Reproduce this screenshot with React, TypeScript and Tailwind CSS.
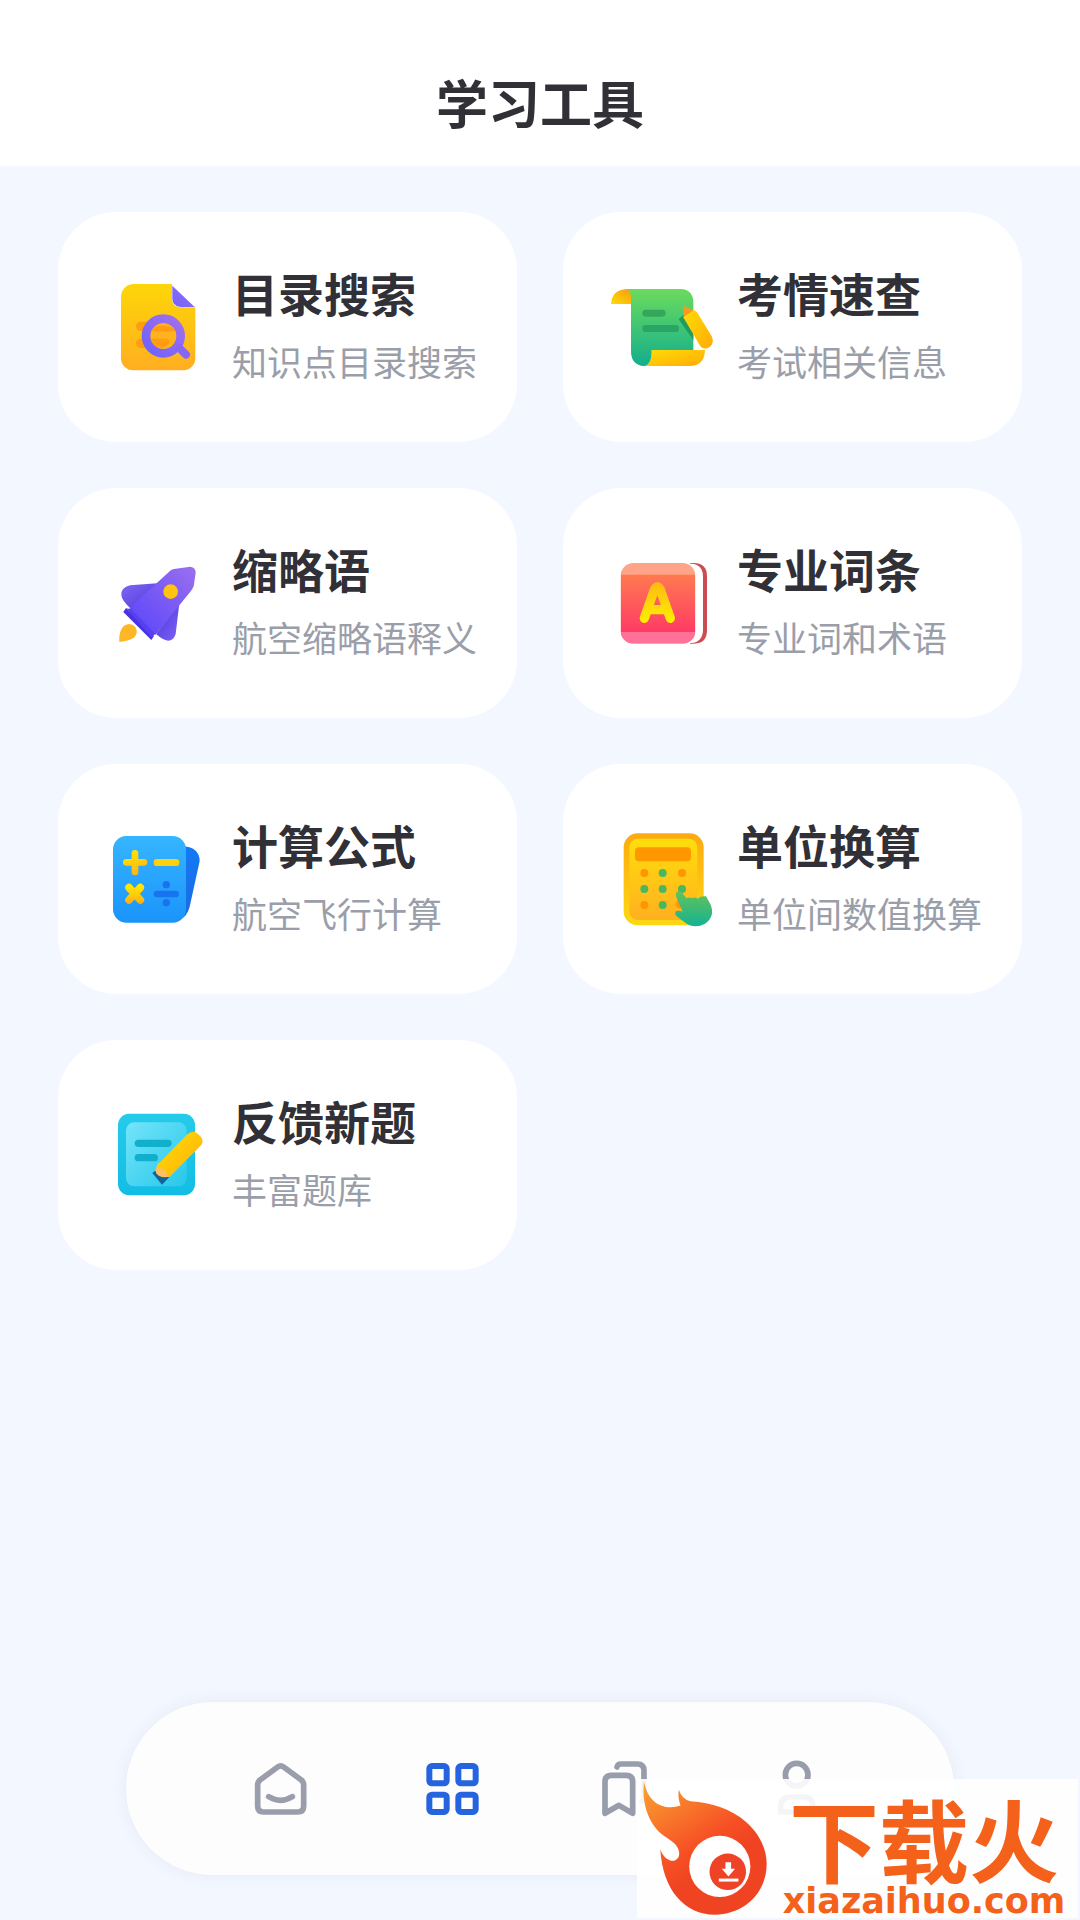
import React from 'react';

interface Tool {
  title: string;
  desc: string;
  icon: React.ReactNode;
}

const DocSearchIcon = () => (
  <svg viewBox="0 21 360 360" className="w-[120px] h-[120px] shrink-0" aria-hidden="true">
    <defs>
      <linearGradient id="doc-a" x1="0" y1="0" x2="0" y2="1">
        <stop offset="0" stopColor="#fdd608" />
        <stop offset="1" stopColor="#ffae20" />
      </linearGradient>
      <linearGradient id="doc-b" x1="1" y1="0" x2="0" y2="1">
        <stop offset="0" stopColor="#a070ee" />
        <stop offset="1" stopColor="#6e62fb" />
      </linearGradient>
    </defs>
    <path d="M101 72H216V118Q218 142 242 142H286V295A36 36 0 0 1 250 331H99A36 36 0 0 1 63 295V110A38 38 0 0 1 101 72Z" fill="url(#doc-a)" />
    <path d="M217 77L284 141H242Q217 139 217 115Z" fill="url(#doc-b)" />
    <rect x="108" y="185" width="112" height="28" rx="14" fill="#ff9c12" />
    <rect x="108" y="236" width="102" height="28" rx="14" fill="#ff9c12" />
    <circle cx="190" cy="228" r="38" fill="#ffb21c" />
    <path d="M153 204Q190 190 227 206V214H153Z" fill="#ff9c12" />
    <path d="M153 236H200Q210 238 208 250L190 264L165 258Z" fill="#ff9c12" />
    <circle cx="190" cy="228" r="52" fill="none" stroke="url(#doc-b)" strokeWidth="26" />
    <path d="M238 264L258 284" stroke="#8667f4" strokeWidth="24" strokeLinecap="round" />
  </svg>
);

const ScrollIcon = () => (
  <svg viewBox="15 21 360 360" className="w-[120px] h-[120px] shrink-0" aria-hidden="true">
    <defs>
      <linearGradient id="scr-a" x1="0" y1="0" x2="0" y2="1">
        <stop offset="0" stopColor="#6bdb5c" />
        <stop offset="1" stopColor="#13ae8d" />
      </linearGradient>
      <linearGradient id="scr-b" x1="0" y1="0" x2="1" y2="1">
        <stop offset="0" stopColor="#ffdd07" />
        <stop offset="1" stopColor="#ffab05" />
      </linearGradient>
      <linearGradient id="scr-c" x1="0" y1="1" x2="1" y2="0">
        <stop offset="0" stopColor="#ffdc05" />
        <stop offset="1" stopColor="#f79a12" />
      </linearGradient>
    </defs>
    <path d="M33 132Q36 89 80 87H96V132Z" fill="url(#scr-c)" />
    <path d="M132 318Q156 312 155 270H315Q313 318 269 318Z" fill="url(#scr-b)" />
    <path d="M75 87H242Q280 89 280 128V270H155Q156 314 132 318Q94 315 93 275V110Q93 88 75 87Z" fill="url(#scr-a)" />
    <rect x="127" y="149" width="70" height="21" rx="10" fill="#35a65a" />
    <rect x="127" y="195" width="110" height="21" rx="10" fill="#2ba565" />
    <path d="M250 164L236 178L280 240V218Z" fill="#1e9d5f" />
    <path d="M250 137L281 151L251 176Z" fill="#f79b20" />
    <path d="M250 172L281 151Q287 151 292 158L335 229Q344 250 329 261Q312 271 301 259Z" fill="url(#scr-b)" />
  </svg>
);

const RocketIcon = () => (
  <svg viewBox="0 9 360 360" className="w-[120px] h-[120px] shrink-0" aria-hidden="true">
    <defs>
      <linearGradient id="roc-a" x1="1" y1="0" x2="0" y2="1">
        <stop offset="0" stopColor="#9b70ef" />
        <stop offset="1" stopColor="#5843fb" />
      </linearGradient>
      <linearGradient id="roc-b" x1="0" y1="0" x2="1" y2="1">
        <stop offset="0" stopColor="#8266f5" />
        <stop offset="1" stopColor="#4b38d9" />
      </linearGradient>
      <linearGradient id="roc-c" x1="0" y1="0" x2="1" y2="1">
        <stop offset="0" stopColor="#4835d8" />
        <stop offset="1" stopColor="#8063f7" />
      </linearGradient>
    </defs>
    <path d="M182 129L90 136Q62 143 64 166Q65 181 93 207Z" fill="url(#roc-b)" />
    <path d="M238 190L227 282Q221 302 204 302Q190 301 168 282Z" fill="url(#roc-c)" />
    <path d="M78 204L162 288L154 300L70 216Z" fill="#4932e6" />
    <path d="M222 87L271 80Q288 83 287 99L281 139Q278 147 271 155L166 284Q160 286 154 280L91 215Q85 209 91 202L209 94Q214 88 222 87Z" fill="url(#roc-a)" />
    <path d="M79 205L93 208L164 280L156 294Z" fill="#5541f0" />
    <circle cx="212" cy="155" r="22" fill="#ffc310" />
    <path d="M58 306Q56 270 72 257Q92 245 106 261Q116 278 103 292Q89 303 58 306Z" fill="#feb624" />
  </svg>
);

const DictionaryIcon = () => (
  <svg viewBox="15 9 360 360" className="w-[120px] h-[120px] shrink-0" aria-hidden="true">
    <defs>
      <linearGradient id="dic-a" x1="0" y1="0" x2="0" y2="1">
        <stop offset="0" stopColor="#fe7a50" />
        <stop offset="1" stopColor="#ff3b65" />
      </linearGradient>
      <linearGradient id="dic-b" gradientUnits="userSpaceOnUse" x1="0" y1="127" x2="0" y2="248">
        <stop offset="0" stopColor="#ffb914" />
        <stop offset="1" stopColor="#fcf000" />
      </linearGradient>
      <clipPath id="dic-c">
        <rect x="62" y="69" width="224" height="242" rx="38" />
      </clipPath>
    </defs>
    <path d="M270 69H282Q321 70 321 109V271Q321 311 282 311H270Z" fill="#cb4d52" />
    <path d="M250 71H274Q309 73 309 111V269Q308 306 274 309H250Z" fill="#fff" />
    <g clipPath="url(#dic-c)">
      <rect x="62" y="69" width="224" height="242" fill="#ffa488" />
      <rect x="62" y="104" width="224" height="172" fill="url(#dic-a)" />
      <rect x="62" y="276" width="224" height="35" fill="#ff7196" />
    </g>
    <path d="M133 235L163 149Q172 133 181 149L211 235M150 209H194" fill="none" stroke="url(#dic-b)" strokeWidth="28" strokeLinecap="round" strokeLinejoin="round" />
  </svg>
);

const FormulaIcon = () => (
  <svg viewBox="0 12 360 360" className="w-[120px] h-[120px] shrink-0" aria-hidden="true">
    <defs>
      <linearGradient id="for-a" x1="0" y1="0" x2="0" y2="1">
        <stop offset="0" stopColor="#36b5ff" />
        <stop offset="1" stopColor="#1a94fb" />
      </linearGradient>
      <linearGradient id="for-b" x1="0" y1="0" x2="0" y2="1">
        <stop offset="0" stopColor="#1479f6" />
        <stop offset="1" stopColor="#1a6ce4" />
      </linearGradient>
      <linearGradient id="for-c" gradientUnits="userSpaceOnUse" x1="70" y1="100" x2="110" y2="180">
        <stop offset="0" stopColor="#fff000" />
        <stop offset="1" stopColor="#ffb514" />
      </linearGradient>
      <linearGradient id="for-d" gradientUnits="userSpaceOnUse" x1="0" y1="205" x2="0" y2="268">
        <stop offset="0" stopColor="#fff000" />
        <stop offset="1" stopColor="#ffac14" />
      </linearGradient>
    </defs>
    <path d="M250 94Q298 97 299 138L269 275Q262 302 241 314Z" fill="url(#for-b)" />
    <rect x="39" y="63" width="219" height="260" rx="40" fill="url(#for-a)" />
    <path d="M105 115V171M79 142H132" stroke="url(#for-c)" strokeWidth="20" strokeLinecap="round" />
    <rect x="161" y="132" width="77" height="21" rx="10" fill="#fed00d" />
    <path d="M87 218L121 255M121 218L87 255" stroke="url(#for-d)" strokeWidth="23" strokeLinecap="round" />
    <rect x="161" y="227" width="76" height="20" rx="10" fill="#1973f0" />
    <circle cx="199" cy="209" r="11" fill="#1973f0" />
    <circle cx="199" cy="263" r="11" fill="#1973f0" />
  </svg>
);

const CalculatorIcon = () => (
  <svg viewBox="15 12 360 360" className="w-[120px] h-[120px] shrink-0" aria-hidden="true">
    <defs>
      <linearGradient id="cal-a" x1="0" y1="0" x2="0" y2="1">
        <stop offset="0" stopColor="#fcaa12" />
        <stop offset="1" stopColor="#fdd811" />
      </linearGradient>
      <linearGradient id="cal-b" x1="0" y1="0" x2="0" y2="1">
        <stop offset="0" stopColor="#ffde0b" />
        <stop offset="1" stopColor="#ffb020" />
      </linearGradient>
      <linearGradient id="cal-c" x1="0" y1="0" x2="0" y2="1">
        <stop offset="0" stopColor="#66c158" />
        <stop offset="1" stopColor="#14b394" />
      </linearGradient>
    </defs>
    <rect x="71" y="55" width="240" height="276" rx="42" fill="url(#cal-a)" />
    <rect x="88" y="71" width="204" height="244" rx="26" fill="url(#cal-b)" />
    <rect x="105" y="97" width="168" height="42" rx="12" fill="#ff9800" />
    <g fill="#ff9500">
      <circle cx="133" cy="174" r="12" />
      <circle cx="246" cy="174" r="12" />
      <circle cx="133" cy="270" r="12" />
      <circle cx="240" cy="268" r="12" />
    </g>
    <g fill="#46b862">
      <circle cx="188" cy="174" r="12" />
      <circle cx="133" cy="222" r="12" />
      <circle cx="188" cy="222" r="12" />
      <circle cx="246" cy="222" r="12" />
      <circle cx="188" cy="270" r="12" />
    </g>
    <path d="M231 230Q241 224 249 236L259 250Q266 245 276 250Q285 245 293 251Q302 242 318 244L331 267Q347 304 315 326Q282 344 253 321L229 303Q222 294 229 288Q237 285 248 290L228 244Q226 235 231 230Z" fill="url(#cal-c)" />
  </svg>
);

const FeedbackIcon = () => (
  <svg viewBox="0 15 360 360" className="w-[120px] h-[120px] shrink-0" aria-hidden="true">
    <defs>
      <linearGradient id="fee-a" x1="0" y1="0" x2="0" y2="1">
        <stop offset="0" stopColor="#26cbea" />
        <stop offset="1" stopColor="#12bde4" />
      </linearGradient>
      <linearGradient id="fee-b" x1="0" y1="0" x2="1" y2="1">
        <stop offset="0" stopColor="#74e5fa" />
        <stop offset="1" stopColor="#27c7ea" />
      </linearGradient>
      <linearGradient id="fee-c" x1="0" y1="0" x2="1" y2="1">
        <stop offset="0" stopColor="#ffe008" />
        <stop offset="1" stopColor="#ffac08" />
      </linearGradient>
    </defs>
    <rect x="54" y="71" width="231" height="245" rx="34" fill="url(#fee-a)" />
    <rect x="78" y="97" width="182" height="192" rx="24" fill="url(#fee-b)" />
    <rect x="104" y="149" width="111" height="22" rx="11" fill="#12afcd" />
    <rect x="104" y="192" width="70" height="22" rx="11" fill="#12afcd" />
    <path d="M165 243L157 249L186 284L209 260Z" fill="#14629b" />
    <path d="M173 222Q163 243 170 252Q180 265 209 260L224 242L194 207Z" fill="#ffc05b" />
    <path d="M174 223L262 133Q275 121 290 128L304 142Q311 154 304 165L209 260Q202 262 200 253Q200 236 178 234Q173 231 174 223Z" fill="url(#fee-c)" />
  </svg>
);

const tools: Tool[] = [
  { title: '目录搜索', desc: '知识点目录搜索', icon: <DocSearchIcon /> },
  { title: '考情速查', desc: '考试相关信息', icon: <ScrollIcon /> },
  { title: '缩略语', desc: '航空缩略语释义', icon: <RocketIcon /> },
  { title: '专业词条', desc: '专业词和术语', icon: <DictionaryIcon /> },
  { title: '计算公式', desc: '航空飞行计算', icon: <FormulaIcon /> },
  { title: '单位换算', desc: '单位间数值换算', icon: <CalculatorIcon /> },
  { title: '反馈新题', desc: '丰富题库', icon: <FeedbackIcon /> },
];

const ToolCard: React.FC<{ tool: Tool }> = ({ tool }) => (
  <button type="button" className="flex items-center gap-3 h-[230px] pl-[42px] bg-white rounded-[58px] text-left">
    {tool.icon}
    <span className="flex flex-col gap-1 pb-1 whitespace-nowrap">
      <span className="text-[46px] leading-[68px] font-bold text-[#303036]">{tool.title}</span>
      <span className="text-[35px] leading-[62px] text-[#9a9ea9]">{tool.desc}</span>
    </span>
  </button>
);

const NavBar = () => (
  <nav className="flex items-center mt-auto mx-[126px] mb-[45px] h-[173px] px-[70px] bg-[#fdfdfe] rounded-full shadow-[0_0_16px_rgba(60,80,140,0.08)]">
    <a href="#home" aria-label="首页" className="flex-1 flex justify-center">
      <svg viewBox="66 56 180 180" className="w-[60px] h-[60px]" fill="none" stroke="#9a9dac" strokeWidth="17" strokeLinecap="round" strokeLinejoin="round">
        <path d="M143 80Q152 73 161 80L214 119Q221 125 221 134V197Q221 215 203 215H101Q83 215 83 197V134Q83 125 90 119Z" />
        <path d="M116 169Q152 191 187 169" />
      </svg>
    </a>
    <a href="#tools" aria-label="学习工具" aria-current="page" className="flex-1 flex justify-center">
      <svg viewBox="582 56 180 180" className="w-[60px] h-[60px]" fill="none" stroke="#2563df" strokeWidth="18">
        <rect x="598" y="77" width="52" height="52" rx="8" />
        <rect x="685" y="77" width="52" height="52" rx="8" />
        <rect x="598" y="163" width="52" height="52" rx="8" />
        <rect x="685" y="163" width="52" height="52" rx="8" />
      </svg>
    </a>
    <a href="#bookmarks" aria-label="收藏" className="flex-1 flex justify-center">
      <svg viewBox="48 56 180 180" className="w-[60px] h-[60px]" fill="none" stroke="#989dab" strokeWidth="17" strokeLinecap="round" strokeLinejoin="round">
        <path d="M75 219V124Q75 105 94 105H139Q158 105 158 124V219L117 195Z" />
        <path d="M111 80Q113 71 123 71H172Q192 71 192 91V176Q192 182 186 182" />
      </svg>
    </a>
    <a href="#profile" aria-label="我的" className="flex-1 flex justify-center">
      <svg viewBox="564 56 180 180" className="w-[60px] h-[60px]" fill="none" stroke="#989dab" strokeWidth="17" strokeLinecap="round">
        <circle cx="650" cy="103" r="34" />
        <path d="M602 215V200Q602 170 632 170H669Q699 170 699 200V215Z" />
      </svg>
    </a>
  </nav>
);

const FlameLogo = () => (
  <svg viewBox="50 117 400 416" className="w-[133px] h-[139px] shrink-0" aria-hidden="true">
    <defs>
      <linearGradient id="flame" gradientUnits="userSpaceOnUse" x1="75" y1="140" x2="240" y2="400">
        <stop offset="0" stopColor="#fb9e31" />
        <stop offset="0.35" stopColor="#f87a2c" />
        <stop offset="0.75" stopColor="#f65024" />
        <stop offset="1" stopColor="#f04322" />
      </linearGradient>
    </defs>
    <path
      fill="url(#flame)"
      d="M71 123C78 163 101 198 145 201Q165 202 181 196C175 179 173 165 176 148Q185 177 211 183C275 188 333 206 378 245C421 283 440 329 440 371C440 459 372 524 284 524C194 524 127 450 120 327C128 349 144 364 162 362C182 356 181 329 165 312C145 293 120 285 102 258C77 223 65 176 71 123Z"
    />
    <circle cx="299" cy="379" r="92" fill="#fff" />
    <circle cx="323" cy="395" r="55" fill="#ef4328" />
    <path d="M316 366H333V386H345L325 409L305 386H316Z" fill="#fff" />
    <path d="M296 420H355" stroke="#fff" strokeWidth="9" />
  </svg>
);

const Watermark = () => (
  <div className="absolute right-[2px] bottom-[2px] flex w-[441px] h-[139px] bg-white/90 text-[#f4611b]">
    <FlameLogo />
    <div className="flex flex-col items-center flex-1 pt-4 whitespace-nowrap">
      <span className="text-[90px] leading-[84px] font-bold">下载火</span>
      <span className="mt-2 text-[35px] leading-[28px] font-bold font-['DejaVu_Sans',sans-serif]">xiazaihuo.com</span>
    </div>
  </div>
);

export default function App() {
  return (
    <div className="relative flex flex-col min-h-screen bg-[#f3f7ff] font-['Noto_Sans_CJK_SC',sans-serif]">
      <header className="flex items-end justify-center h-[166px] pb-[26px] bg-white">
        <h1 className="text-[52px] leading-[76px] font-bold text-[#303036]">学习工具</h1>
      </header>
      <main className="grid grid-cols-2 gap-[46px] px-[58px] pt-[46px] pb-10">
        {tools.map((tool) => (
          <ToolCard key={tool.title} tool={tool} />
        ))}
      </main>
      <NavBar />
      <Watermark />
    </div>
  );
}
